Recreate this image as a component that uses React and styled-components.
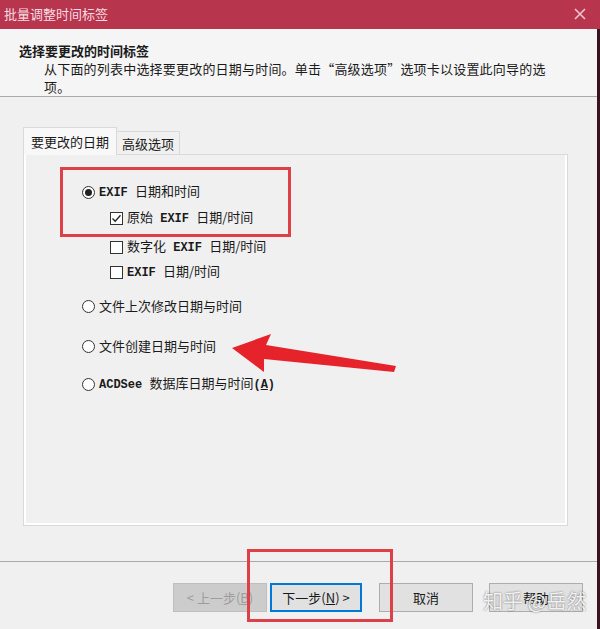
import React from "react";
//styles
import styled, { createGlobalStyle } from "styled-components";

const GlobalStyle = createGlobalStyle`
    html, body {
        margin: 0;
        padding: 0;
        background: #f0f0f0;
    }
    body {
        font-family: "Noto Sans CJK SC", "Microsoft YaHei", sans-serif;
        color: #1a1a1a;
    }
`;

function App() {
    return (
        <>
            <GlobalStyle />
            <Window>
                <TitleBar>
                    <span>批量调整时间标签</span>
                    <CloseIcon width='14' height='14' viewBox='0 0 14 14'>
                        <path d='M2 2 L12 12 M12 2 L2 12' />
                    </CloseIcon>
                </TitleBar>
                <Frame>
                    <Header>
                        <HeaderTitle>选择要更改的时间标签</HeaderTitle>
                        <HeaderText>
                            从下面的列表中选择要更改的日期与时间。单击“高级选项”选项卡以设置此向导的选
                            <br />
                            项。
                        </HeaderText>
                    </Header>
                    <Body>
                        <TabRow>
                            <Tab $active>要更改的日期</Tab>
                            <Tab>高级选项</Tab>
                        </TabRow>
                        <Panel>
                            <Option $top={0}>
                                <Radio $checked />
                                <Label>
                                    <Latin>{"EXIF "}</Latin>日期和时间
                                </Label>
                            </Option>
                            <Option $top={6} $indent>
                                <Check $checked>
                                    <svg width='11' height='11' viewBox='0 0 11 11'>
                                        <polyline points='1.5,5.5 4.2,8.3 9.5,2.2' />
                                    </svg>
                                </Check>
                                <Label>
                                    原始<Latin>{" EXIF "}</Latin>日期/时间
                                </Label>
                            </Option>
                            <Option $top={9} $indent>
                                <Check />
                                <Label>
                                    数字化<Latin>{" EXIF "}</Latin>日期/时间
                                </Label>
                            </Option>
                            <Option $top={5} $indent>
                                <Check />
                                <Label>
                                    <Latin>{"EXIF "}</Latin>日期/时间
                                </Label>
                            </Option>
                            <Option $top={14}>
                                <Radio />
                                <Label>文件上次修改日期与时间</Label>
                            </Option>
                            <Option $top={20}>
                                <Radio />
                                <Label>文件创建日期与时间</Label>
                            </Option>
                            <Option $top={18}>
                                <Radio />
                                <Label>
                                    <Latin>{"ACDSee "}</Latin>数据库日期与时间
                                    <Latin>
                                        (<u>A</u>)
                                    </Latin>
                                </Label>
                            </Option>
                        </Panel>
                    </Body>
                    <Footer>
                        <Button $disabled>
                            &lt; 上一步(<u>B</u>)
                        </Button>
                        <Button $primary $gap={3}>
                            下一步(<u>N</u>) &gt;
                        </Button>
                        <Button $gap={17}>取消</Button>
                        <Button $gap={16}>帮助</Button>
                    </Footer>
                </Frame>

                {/* annotations laid over the dialog */}
                <Highlight $x={60} $y={167} $w={231} $h={70} />
                <Highlight $x={247} $y={549} $w={146} $h={73} />
                <Arrow width='600' height='629' viewBox='0 0 600 629'>
                    <polygon points='232,348 271,334 266,345 396,366 394,372 264,359 264,372' />
                </Arrow>
                <Watermark>知乎 @岳然</Watermark>
            </Window>
        </>
    );
}

const Window = styled.div`
    position: relative;
    width: 600px;
    height: 629px;
    display: flex;
    flex-direction: column;
    overflow: hidden;
    background: #f0f0f0;
`;

const TitleBar = styled.div`
    height: 29px;
    flex: none;
    display: flex;
    align-items: center;
    justify-content: space-between;
    padding: 0 13px 2px 4px;
    box-sizing: border-box;
    background: #b7354d;
    color: #f7dde2;
    font-size: 13px;
`;

const CloseIcon = styled.svg`
    stroke: #f2c4cd;
    stroke-width: 1.6;
    fill: none;
`;

const Frame = styled.div`
    flex: 1;
    display: flex;
    flex-direction: column;
    border-right: 3px solid #3b1320;
`;

const Header = styled.div`
    height: 68px;
    flex: none;
    box-sizing: border-box;
    padding-top: 13px;
    background: #f5f5f5;
    border-bottom: 1px solid #a9a9a9;
`;

const HeaderTitle = styled.div`
    padding-left: 19px;
    font-size: 13px;
    line-height: 18px;
    font-weight: 700;
`;

const HeaderText = styled.div`
    padding-left: 44px;
    font-size: 13px;
    line-height: 18px;
    letter-spacing: 0.2px;
`;

const Body = styled.div`
    padding: 31px 29px 0 23px;
`;

const TabRow = styled.div`
    display: flex;
    align-items: flex-end;
    height: 27px;
    margin-bottom: -1px;
`;

const Tab = styled.div`
    position: relative;
    z-index: ${(p) => (p.$active ? 1 : 0)};
    height: ${(p) => (p.$active ? "28px" : "24px")};
    padding: 0 ${(p) => (p.$active ? "7px" : "5px")};
    box-sizing: border-box;
    display: flex;
    align-items: center;
    font-size: 13px;
    background: ${(p) => (p.$active ? "#f8f8f8" : "#f0f0f0")};
    border: 1px solid #d9d9d9;
    border-bottom: ${(p) => (p.$active ? "none" : "1px solid #d9d9d9")};
    border-left: ${(p) => (p.$active ? "1px solid #d9d9d9" : "none")};
`;

const Panel = styled.div`
    height: 372px;
    box-sizing: border-box;
    padding: 27px 0 0 58px;
    border: 1px solid #d9d9d9;
    background: #f0f0f0;
    box-shadow: inset 2px 0 0 #fff, inset -2px -2px 0 #fff;
`;

const Option = styled.div`
    display: flex;
    align-items: center;
    height: 20px;
    margin-top: ${(p) => p.$top}px;
    padding-left: ${(p) => (p.$indent ? "28px" : "0")};
`;

const Label = styled.span`
    font-size: 13px;
    line-height: 20px;
    white-space: pre;
`;

const Radio = styled.span`
    width: 13px;
    height: 13px;
    margin-right: 4px;
    box-sizing: border-box;
    border: 1px solid #333;
    border-radius: 50%;
    background: #fff;
    display: flex;
    align-items: center;
    justify-content: center;

    &::after {
        content: "";
        display: ${(p) => (p.$checked ? "block" : "none")};
        width: 7px;
        height: 7px;
        border-radius: 50%;
        background: #222;
    }
`;

const Check = styled.span`
    width: 13px;
    height: 13px;
    margin-right: 4px;
    box-sizing: border-box;
    border: 1px solid #333;
    background: #fff;
    display: flex;
    align-items: center;
    justify-content: center;

    polyline {
        fill: none;
        stroke: #222;
        stroke-width: 1.3;
    }
`;

const Latin = styled.span`
    font-family: "Liberation Mono", monospace;
    font-weight: 700;
    font-size: 12px;
    white-space: pre;
`;

const Footer = styled.div`
    margin-top: 35px;
    border-top: 1px solid #a9a9a9;
    display: flex;
    justify-content: flex-end;
    padding: 21px 14px 0 0;
`;

const Button = styled.div`
    width: ${(p) => (p.$primary ? "92px" : "94px")};
    height: 29px;
    margin-left: ${(p) => p.$gap || 0}px;
    box-sizing: border-box;
    display: flex;
    align-items: center;
    justify-content: center;
    font-size: 13px;
    white-space: nowrap;
    background: ${(p) => (p.$disabled ? "#cccccc" : "#e1e1e1")};
    color: ${(p) => (p.$disabled ? "#9d9d9d" : "#1a1a1a")};
    border: 1px solid ${(p) => (p.$disabled ? "#bfbfbf" : p.$primary ? "#0078d7" : "#adadad")};
    box-shadow: ${(p) => (p.$primary ? "inset 0 0 0 1px #0078d7" : "none")};
`;

const Highlight = styled.div`
    position: absolute;
    left: ${(p) => p.$x}px;
    top: ${(p) => p.$y}px;
    width: ${(p) => p.$w}px;
    height: ${(p) => p.$h}px;
    box-sizing: border-box;
    border: 3px solid #dd4049;
    pointer-events: none;
`;

const Arrow = styled.svg`
    position: absolute;
    left: 0;
    top: 0;
    fill: #e6232b;
    pointer-events: none;
`;

const Watermark = styled.div`
    position: absolute;
    left: 483px;
    top: 586px;
    font-size: 20px;
    color: rgba(255, 255, 255, 0.88);
    text-shadow: 0 0 2px rgba(0, 0, 0, 0.55);
    white-space: nowrap;
`;

export default App;
